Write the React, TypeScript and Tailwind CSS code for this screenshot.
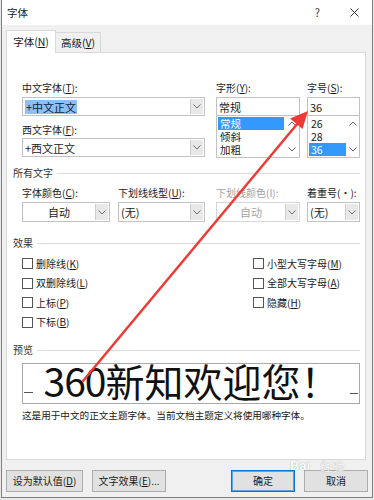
import React from "react";

// access key letter, underlined like in the Windows dialog
const K = ({ k }: { k: string }) => <span className="underline">{k}</span>;

const Chevron = ({ up = false, color = "#707070" }: { up?: boolean; color?: string }) => (
  <svg width="8" height="5" viewBox="0 0 8 5" className={up ? "rotate-180" : ""}>
    <path d="M0.5 0.5 L4 4 L7.5 0.5" fill="none" stroke={color} strokeWidth="1" />
  </svg>
);

const Label = ({ children, disabled = false }: { children: React.ReactNode; disabled?: boolean }) => (
  <div className={`h-[12px] text-[10px] leading-[12px] whitespace-nowrap ${disabled ? "text-[#a0a0a0]" : "text-[#1a1a1a]"}`}>
    {children}
  </div>
);

const Select = ({
  children,
  center = false,
  disabled = false,
  button = true,
  tall = false,
}: {
  children: React.ReactNode;
  center?: boolean;
  disabled?: boolean;
  button?: boolean;
  tall?: boolean;
}) => (
  <div className={`flex ${tall ? "h-[20px]" : "h-[19px]"} border bg-white ${disabled ? "border-[#d6d6d6]" : "border-[#c2c2c2]"}`}>
    <div
      className={`flex-1 flex items-center px-[2px] text-[11px] leading-[14px] whitespace-nowrap ${center ? "justify-center" : ""} ${
        disabled ? "text-[#a6a6a6]" : "text-[#1a1a1a]"
      }`}
    >
      {children}
    </div>
    {button && (
      <div className="w-[13px] my-[1px] mr-[1px] flex items-center justify-center bg-[#e8e8e8] border-l border-[#cfcfcf]">
        <Chevron />
      </div>
    )}
  </div>
);

const List = ({ items, sel, bar }: { items: string[]; sel: number; bar: string }) => (
  <div className="flex h-[42px] border border-t-0 border-[#c2c2c2] bg-white">
    <div className="flex-1 flex flex-col pt-[1px] pl-[1px]">
      {items.map((it, i) => (
        <div
          key={it}
          className={`h-[13px] flex items-center px-[2px] text-[10.5px] leading-[12px] ${
            i === sel ? "bg-[#3399ff] text-white" : "text-[#1a1a1a]"
          }`}
        >
          {it}
        </div>
      ))}
    </div>
    <div className={`${bar} flex flex-col justify-between items-center py-[5px]`}>
      <Chevron up color="#606060" />
      <Chevron color="#606060" />
    </div>
  </div>
);

const Section = ({ title }: { title: string }) => (
  <div className="flex items-center h-[12px]">
    <span className="text-[10px] leading-[12px] text-[#333]">{title}</span>
    <div className="flex-1 h-px bg-[#dcdcdc] ml-[4px]" />
  </div>
);

const Check = ({ children }: { children: React.ReactNode }) => (
  <div className="flex items-center h-[19.5px]">
    <div className="w-[11px] h-[11px] border border-[#555] bg-white" />
    <span className="ml-[3px] text-[10px] leading-[12px] text-[#1a1a1a] whitespace-nowrap">{children}</span>
  </div>
);

const Button = ({ children, w, primary = false }: { children: React.ReactNode; w: string; primary?: boolean }) => (
  <div
    className={`${w} h-[22px] flex items-center justify-center text-[10px] leading-[12px] text-[#1a1a1a] bg-[#e1e1e1] border ${
      primary ? "border-[#0078d7] shadow-[inset_0_0_0_1px_#5aa4e6]" : "border-[#adadad]"
    }`}
  >
    {children}
  </div>
);

export default function App() {
  return (
    <div className="relative w-[374px] h-[500px] bg-[#e9e9e9] font-['Noto_Sans_CJK_SC','Noto_Sans',sans-serif] overflow-hidden">
      <div className="ml-[1px] w-[372px] h-[498px] flex flex-col bg-[#f0f0f0] border border-t-0 border-[#7f7f7f]">
        {/* Title bar */}
        <div className="h-[25px] bg-white flex items-center pl-[5px] pr-[13px]">
          <span className="text-[10.5px] text-[#1a1a1a]">字体</span>
          <div className="flex-1" />
          <span className="text-[11px] text-[#333] mr-[30px]">?</span>
          <svg width="9" height="9" viewBox="0 0 9 9">
            <path d="M0.5 0.5 L8.5 8.5 M8.5 0.5 L0.5 8.5" stroke="#333" strokeWidth="1" />
          </svg>
        </div>

        {/* Tabs */}
        <div className="h-[27px] flex items-end pl-[4px]">
          <div className="relative z-10 -mb-px h-[23px] w-[50px] bg-white border border-b-0 border-[#d9d9d9] flex items-center justify-center text-[10.5px] text-[#1a1a1a]">
            字体(<K k="N" />)
          </div>
          <div className="h-[20px] w-[45px] bg-[#f0f0f0] border border-l-0 border-b-0 border-[#d9d9d9] flex items-center justify-center text-[10.5px] text-[#1a1a1a]">
            高级(<K k="V" />)
          </div>
        </div>

        {/* Panel */}
        <div className="ml-[4px] w-[360px] h-[408px] bg-white border border-[#d9d9d9] pl-[6px] pr-[5px] flex flex-col">
          {/* Font pickers */}
          <div className="flex pl-[9px] mt-[29px]">
            <div className="w-[183px] flex flex-col">
              <Label>
                中文字体(<K k="T" />):
              </Label>
              <div className="mt-[3px]">
                <Select>
                  <span className="bg-[#8cbff3] text-[#0d2340] px-[1px]">+中文正文</span>
                </Select>
              </div>
              <div className="mt-[8px]">
                <Label>
                  西文字体(<K k="F" />):
                </Label>
              </div>
              <div className="mt-[2px]">
                <Select>+西文正文</Select>
              </div>
            </div>
            <div className="ml-[11px] w-[84px] flex flex-col">
              <Label>
                字形(<K k="Y" />):
              </Label>
              <div className="mt-[3px]">
                <Select button={false}>常规</Select>
              </div>
              <List items={["常规", "倾斜", "加粗"]} sel={0} bar="w-[15px]" />
            </div>
            <div className="ml-[7px] w-[53px] flex flex-col">
              <Label>
                字号(<K k="S" />):
              </Label>
              <div className="mt-[3px]">
                <Select button={false}>36</Select>
              </div>
              <List items={["26", "28", "36"]} sel={2} bar="w-[13px]" />
            </div>
          </div>

          {/* All text */}
          <div className="mt-[9px]">
            <Section title="所有文字" />
          </div>
          <div className="flex pl-[9px] mt-[8px]">
            <div className="w-[88px] flex flex-col">
              <Label>
                字体颜色(<K k="C" />):
              </Label>
              <div className="mt-[3px]">
                <Select center tall>自动</Select>
              </div>
            </div>
            <div className="ml-[8px] w-[87px] flex flex-col">
              <Label>
                下划线线型(<K k="U" />):
              </Label>
              <div className="mt-[3px]">
                <Select tall>(无)</Select>
              </div>
            </div>
            <div className="ml-[11px] w-[84px] flex flex-col">
              <Label disabled>下划线颜色(I):</Label>
              <div className="mt-[3px]">
                <Select center disabled tall>
                  自动
                </Select>
              </div>
            </div>
            <div className="ml-[7px] w-[53px] flex flex-col">
              <Label>着重号(·):</Label>
              <div className="mt-[3px]">
                <Select tall>(无)</Select>
              </div>
            </div>
          </div>

          {/* Effects */}
          <div className="mt-[15px]">
            <Section title="效果" />
          </div>
          <div className="flex pl-[9px] mt-[5px]">
            <div className="w-[231px] flex flex-col">
              <Check>
                删除线(<K k="K" />)
              </Check>
              <Check>
                双删除线(<K k="L" />)
              </Check>
              <Check>
                上标(<K k="P" />)
              </Check>
              <Check>
                下标(<K k="B" />)
              </Check>
            </div>
            <div className="flex flex-col">
              <Check>
                小型大写字母(<K k="M" />)
              </Check>
              <Check>
                全部大写字母(<K k="A" />)
              </Check>
              <Check>
                隐藏(<K k="H" />)
              </Check>
            </div>
          </div>

          {/* Preview */}
          <div className="mt-[12px]">
            <Section title="预览" />
          </div>
          <div className="ml-[9px] mt-[7px] h-[41px] border border-[#a8a8a8] flex items-start justify-between px-[1px]">
            <div className="w-[9px] h-px bg-[#555] mt-[28px]" />
            <div className="text-[39px] leading-[33px] text-[#111] whitespace-nowrap">
              <span className="tracking-[-1px]">360</span>
              <span>新知欢迎您！</span>
            </div>
            <div className="w-[8px] h-px bg-[#555] mt-[29px]" />
          </div>
          <div className="ml-[9px] mt-[5px] h-[12px] text-[9.6px] leading-[12px] text-[#1a1a1a] whitespace-nowrap">
            这是用于中文的正文主题字体。当前文档主题定义将使用哪种字体。
          </div>
        </div>

        {/* Footer buttons */}
        <div className="flex pl-[4px] pr-[4px] mt-[10px]">
          <Button w="w-[77px]">
            设为默认值(<K k="D" />)
          </Button>
          <div className="ml-[9px]">
            <Button w="w-[74px]">
              文字效果(<K k="E" />)...
            </Button>
          </div>
          <div className="flex-1" />
          <Button w="w-[64px]" primary>
            确定
          </Button>
          <div className="ml-[9px]">
            <Button w="w-[64px]">取消</Button>
          </div>
        </div>
      </div>

      {/* Baidu watermark */}
      <div className="absolute left-[290px] top-[458px] flex items-end text-white opacity-80 [text-shadow:0_0_1px_#888] pointer-events-none">
        <span className="text-[13px] font-bold leading-[16px] font-['Liberation_Sans',sans-serif]">Bai</span>
        <span className="text-[12px] leading-[16px] ml-[10px]">经验</span>
      </div>

      {/* Red annotation arrow */}
      <svg className="absolute left-0 top-0 pointer-events-none" width="374" height="500" viewBox="0 0 374 500">
        <line x1="83" y1="381" x2="298" y2="123" stroke="#f03a35" strokeWidth="2.5" strokeLinecap="round" />
        <polygon points="308,111 302.5,129 290,118.5" fill="#f03a35" />
      </svg>
    </div>
  );
}
